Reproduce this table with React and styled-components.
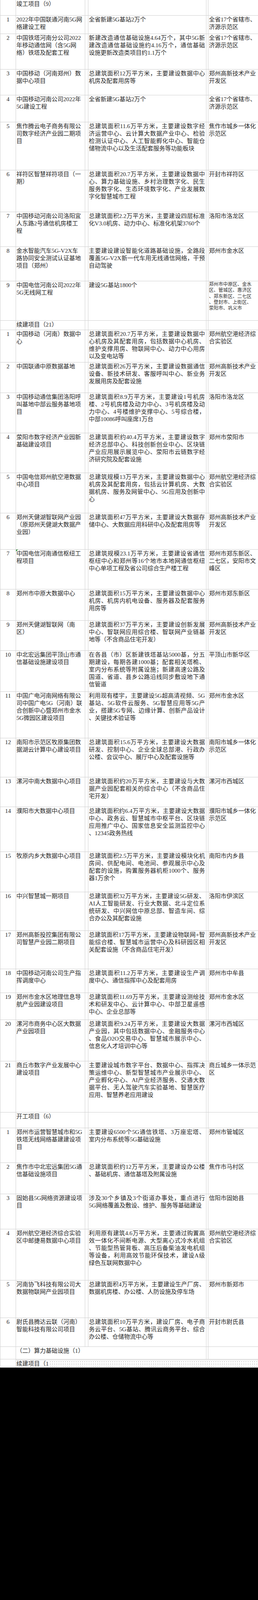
import React from 'react';
import styled, { createGlobalStyle } from 'styled-components';

const LINE = '#cfcfcf';

const GlobalStyle = createGlobalStyle`
  html, body { margin: 0; padding: 0; }
  body {
    background: #000;
    overflow-x: hidden;
    font-family: "Liberation Serif", "Noto Sans CJK SC", serif;
    color: #262626;
  }
`;

const Sheet = styled.div`
  width: 660px;
  background: #fff;
`;

const Row = styled.div`
  display: grid;
  grid-template-columns: 41px 177px 8px 302px 5px 127px;
  height: ${(p) => p.$h}px;
`;

const Cell = styled.div`
  box-sizing: border-box;
  min-width: 0;
  border-bottom: 1px solid ${LINE};
  border-right: 1px solid ${LINE};
  font-size: 15px;
  line-height: 19px;
`;

const NumCell = styled(Cell)`
  border-left: 1px solid ${LINE};
  text-align: center;
  padding-top: 1px;
  border-bottom: ${(p) => (p.$noBottom ? 'none' : `1px solid ${LINE}`)};
`;

const NameCell = styled(Cell)`
  position: relative;
  padding: 1px 3px 0 1px;
`;

const Flag = styled.span`
  position: absolute;
  top: 0;
  left: 0;
  width: 0;
  height: 0;
  border-top: 5px solid #2f8f3a;
  border-right: 5px solid transparent;
`;

const Gutter = styled(Cell)``;

const DescCell = styled(Cell)`
  padding: 1px 2.7px 0 1.3px;
`;

const LocCell = styled(Cell)`
  border-right: none;
  padding: 1px 0 0 1.5px;
`;

const SpanCell = styled(Cell)`
  grid-column: span 3;
  padding: 1px 3px 0 1px;
`;

const Line = styled.div`
  white-space: nowrap;
  text-align: justify;
  text-align-last: ${(p) => (p.$justify ? 'justify' : 'left')};
`;

const SmallLine = styled.div`
  white-space: nowrap;
  font-size: 12px;
  line-height: 15.3px;
  letter-spacing: 0.1px;
  color: #2a2a2a;
`;

const TailCell = styled.div`
  grid-column: 2 / -1;
  box-sizing: border-box;
  display: flex;
  align-items: stretch;
  border-top: 1px solid ${LINE};
  margin-top: 1px;
  padding-left: 1px;
  font-size: 15px;
  line-height: 19px;
`;

const TailText = styled.span`
  white-space: nowrap;
`;

const Dots = styled.div`
  flex: 1;
  margin-left: 1px;
  background-image: radial-gradient(circle, #b9b9b9 0.7px, transparent 1.1px);
  background-size: 5.5px 6px;
  background-position: 0 1px;
`;

const rows = [
  { t: 'sec', h: 40, text: '竣工项目（9）' },
  { t: 'item', h: 47, n: 1, name: ['2022年中国联通河南5G网', '络建设工程'], desc: ['全省新建5G基站2万个'], loc: ['全省17个省辖市、', '济源示范区'] },
  { t: 'item', h: 91, n: 2, name: ['中国铁塔河南分公司2022', '年移动通信网（含5G网', '络）铁塔及配套工程'], desc: ['新建改造通信基础设施4.64万个，其中5G新', '建改造通信基础设施约4.16万个，通信基础', '设施更新改造类项目约1.1万个'], loc: ['全省17个省辖市、', '济源示范区'] },
  { t: 'item', h: 66, n: 3, name: ['中国移动（河南郑州）数', '据中心项目'], desc: ['总建筑面积12万平方米，主要建设数据中心', '机房及配套用房等'], loc: ['郑州高新技术产业', '开发区'] },
  { t: 'item', h: 69, n: 4, name: ['中国移动河南公司2022年', '5G建设工程'], desc: ['全省新建5G基站2万个'], loc: ['全省17个省辖市、', '济源示范区'] },
  { t: 'item', h: 123, n: 5, name: ['焦作腾云电子商务有限公', '司数字经济产业园二期项', '目'], desc: ['总建筑面积11.6万平方米，主要建设数字经', '济运营中心、云计算大数据产业中心、检验', '检测认证中心、人工智能孵化中心、智能仓', '储物流中心以及生活配套服务等功能板块'], loc: ['焦作市城乡一体化', '示范区'] },
  { t: 'item', h: 107, n: 6, name: ['祥符区智慧祥符项目（一', '期）'], desc: ['总建筑面积20.7万平方米，主要建设数据中', '心、算力基础设施、乡村治理数字化、民生', '服务数字化、生态环境数字化、产业发展数', '字化智慧城市工程'], loc: ['开封市祥符区'] },
  { t: 'item', h: 89, n: 7, name: ['中国移动河南公司洛阳宜', '人东路2号通信机房楼工', '程'], desc: ['总建筑面积2.2万平方米，主要建设四层标准', '化V3.0机房、动力中心、标准化机架3760个'], loc: ['洛阳市洛龙区'] },
  { t: 'item', h: 88, n: 8, name: ['金水智能汽车5G-V2X车', '路协同安全测试认证基地', '项目（郑州）'], desc: ['主要建设建设智能化道路基础设施，全路段', '覆盖5G-V2X新一代车用无线通信网络，干预', '自动驾驶'], loc: ['郑州市金水区'] },
  { t: 'item', h: 101, n: 9, name: ['中国电信河南公司2022年', '5G无线网工程'], desc: ['建设5G基站1800个'], small: true, loc: ['郑州市中原区、金水', '区、管城区、惠济区', '、郑东新区、二七区', '、登封市、上街区、', '荥阳市、巩义市'] },
  { t: 'sec', h: 24, text: '续建项目（21）' },
  { t: 'item', h: 83, n: 1, name: ['中国移动（河南）数据中', '心'], desc: ['总建筑面积20.7万平方米，主要建设数据中', '心机房及其配套用房，包括数据中心机房、', '维护支撑用房、物联网中心、动力中心用房', '以及变电站等'], loc: ['郑州航空港经济综', '合实验区'] },
  { t: 'item', h: 78, n: 2, name: ['中国联通中原数据基地'], desc: ['总建筑面积26万平方米，主要建设数据通信', '设备、新技术研发、客服呼叫中心、新业务', '发展用房及配套设施'], loc: ['郑州高新技术产业', '开发区'] },
  { t: 'item', h: 103, n: 3, name: ['中国移动通信集团洛阳呼', '叫基地中部云服务基地项', '目'], desc: ['总建筑面积8.9万平方米，主要建设1号机房', '楼、2号机房楼及动力中心、3号机房楼及动', '力中心、4号楼维护支撑中心、5号综合楼，', '中部10086呼叫座席1万台'], loc: ['洛阳市洛龙区'] },
  { t: 'item', h: 102, n: 4, name: ['荥阳市数字经济产业园新', '基础建设项目'], desc: ['总建筑面积约40.4万平方米，主要建设数字', '经济总部中心、科技创新创业中心、区块链', '产业应用展示展览中心、荥阳市云链数字经', '济研究院及配套设施'], loc: ['郑州市荥阳市'] },
  { t: 'item', h: 103, n: 5, name: ['中国电信郑州航空港数据', '中心项目'], desc: ['总建筑规模13万平方米，主要建设数据中心', '机房及其配套用房，包括云计算机房、大数', '据机房、服务及网管中心、5G应用及创新中', '心'], loc: ['郑州航空港经济综', '合实验区'] },
  { t: 'item', h: 93, n: 6, name: ['郑州天健湖智联网产业园', '（原郑州天健湖大数据产', '业园）'], desc: ['总建筑面积47万平方米，主要建设大数据存', '储中心、大数据应用科研中心及配套用房等'], loc: ['郑州高新技术产业', '开发区'] },
  { t: 'item', h: 102, n: 7, flag: true, name: ['中国电信河南通信枢纽工', '程项目'], desc: ['总建筑规模23.1万平方米，主要建设省通信', '枢纽中心和郑州等16个地市本地网通信枢纽', '中心单项工程及省公司综合生产楼工程'], loc: ['郑州市郑东新区、', '二七区，安阳市文', '峰区'] },
  { t: 'item', h: 80, n: 8, name: ['郑州市中原大数据中心'], desc: ['总建筑面积15万平方米，主要建设数据中心', '机房、机房内机电设备、服务器及配套服务', '用房等'], loc: ['郑州市郑东新区'] },
  { t: 'item', h: 77, n: 9, name: ['郑州天健湖智联网（南', '区）'], desc: ['总建筑面积37万平方米，主要建设创新发展', '中心、智联网应用综合楼、智联网产业链基', '地等（不含商品住宅开发）'], loc: ['郑州高新技术产业', '开发区'] },
  { t: 'item', h: 105, n: 10, name: ['中北宏远集团平顶山市通', '信基础设施建设项目'], desc: ['在各县（市）区新建铁塔基站5000基，分五', '期建设，每期各建1000基；配套相关塔桅、', '室内分布系统等附属设施；新建高速公路及', '国道、省道、县乡公路沿线同步敷设地下通', '信管道'], loc: ['平顶山市新华区'] },
  { t: 'item', h: 119, n: 11, name: ['中国广电河南网络有限公', '司中国广电5G（河南）联', '合创新中心暨郑州市金水', '5G微园区建设项目'], desc: ['利用现有楼宇，主要建设5G超高清视频、5G', '基站、5G软件云服务、5G智慧应用等5G产', '业，搭建5G专网、边缘计算、创新产品设计', '、关键技术验证等'], loc: ['郑州市金水区'] },
  { t: 'item', h: 100, n: 12, name: ['南阳市示范区牧原集团数', '据湖云计算中心建设项目'], desc: ['总建筑面积15.6万平方米，主要建设大数据', '研发、控制中心、企业全球总部港、行政办', '公楼、会议中心、展厅中心及配套设施等'], loc: ['南阳市城乡一体化', '示范区'] },
  { t: 'item', h: 76, n: 13, name: ['漯河中南大数据中心项目'], desc: ['总建筑面积约20万平方米，主要建设与大数', '据产业园配套相关的综合中心（不含商品住', '宅开发）'], loc: ['漯河市西城区'] },
  { t: 'item', h: 115, n: 14, name: ['濮阳市大数据中心项目'], desc: ['总建筑面积约6.4万平方米，主要建设大数据', '中心、政务云、智慧城市中枢平台、区块链', '应用推广中心、国家信息安全监测监控中心', '、12345政务热线'], loc: ['濮阳市城乡一体化', '示范区'] },
  { t: 'item', h: 103, n: 15, name: ['牧原内乡大数据中心项目'], desc: ['总建筑面积2.5万平方米，主要建设模块化机', '房间、供配电间、电池间、参观展示中心及', '配套的设施，购置服务器机柜1000个、服务', '器1万余个'], loc: ['南阳市内乡县'] },
  { t: 'item', h: 99, n: 16, name: ['中兴智慧城一期项目'], desc: ['总建筑面积32万平方米，主要建设5G研发、', 'AI人工智能研发、行业大数据、北斗定位系', '统研发、中兴网信中原总部、智造车间、综', '合办公及其配套设施'], loc: ['洛阳市伊滨区'] },
  { t: 'item', h: 98, n: 17, name: ['郑州高新投控集团有限公', '司智慧产业园二期项目'], desc: ['总建筑面积17万平方米，主要建设物联网+智', '能综合楼、智慧城市运营中心及科研园区相', '关配套设施（不含商品住宅开发）'], loc: ['郑州高新技术产业', '开发区'] },
  { t: 'item', h: 61, n: 18, name: ['中国移动河南公司生产指', '挥调度中心'], desc: ['总建筑面积11.2万平方米，主要建设生产调', '度中心、通信指挥中心及配套用房'], loc: ['郑州市中牟县'] },
  { t: 'item', h: 69, n: 19, name: ['郑州市金水区地理信息导', '航产业园建设项目'], desc: ['总建筑面积11.69万平方米，主要建设测绘技', '术和研发中心、云计算中心、中部卫星遥感', '中心、企业总部等'], loc: ['郑州市金水区'] },
  { t: 'item', h: 106, n: 20, name: ['漯河市商务中心区大数据', '产业园项目'], desc: ['总建筑面积9.24万平方米，主要建设大数据', '产业园，其中包括数据中心、金融服务中心', '、食品O2O交易中心、智慧城市展示中心、', '信息化人才培训中心等'], loc: ['漯河市西城区'] },
  { t: 'item', h: 131, n: 21, name: ['商丘市数字产业发展中心', '建设项目'], desc: ['主要建设城市数字平台、数据中心、指挥决', '策运维中心、新型智慧城市产业展示中心、', '产业孵化中心、AI产业经济服务、交通大数', '据平台、无人驾驶汽车实验基地、智慧医疗', '应用、智慧养老应用建设'], loc: ['商丘城乡一体示范', '区'] },
  { t: 'sec', h: 40, text: '开工项目（6）' },
  { t: 'item', h: 89, n: 1, name: ['郑州市运营智慧城市和5G', '铁塔无线网络基建建设项', '目'], desc: ['主要建设6500个5G通信铁塔、3万座宏塔、', '室内分布系统等5G基础设施'], loc: ['郑州市管城区'] },
  { t: 'item', h: 80, n: 2, name: ['焦作市中北宏远集团5G通', '信基础设施项目'], desc: ['总建筑面积约12万平方米，主要建设办公楼', '、基础机房、通信基塔及附属设施'], loc: ['焦作市马村区'] },
  { t: 'item', h: 90, n: 3, name: ['固始县5G网络资源建设项', '目'], desc: ['涉及30个乡镇及3个街道办事处，重点进行', '5G网络覆盖及敷设、维护、服务等基础建设'], loc: ['信阳市固始县'] },
  { t: 'item', h: 131, n: 4, name: ['郑州航空港经济综合实验', '区中邮捷易数据中心项目'], desc: ['利用原有建筑4.6万平方米，主要通过购置高', '效一体化不间断电源、大型离心式冷水机组', '、节能型热管背板、高压后备柴油发电机组', '等设备，利用高效节能环保技术，建设A级', '绿色互联网数据中心'], loc: ['郑州航空港经济综', '合实验区'] },
  { t: 'item', h: 96, n: 5, name: ['河南协飞科技有限公司大', '数据物联网产业园项目'], desc: ['总建筑面积4万平方米，主要建设生产厂房、', '数据机房楼、办公楼、人防设施及停车场'], loc: ['郑州市新郑市'] },
  { t: 'item', h: 74, n: 6, name: ['尉氏县腾达云联（河南）', '智能科技有限公司项目'], desc: ['总建筑面积10万平方米，建设厂房、电子商', '务云平台、5G基站、腾讯云商务平台、综合', '办公楼、仓储物流中心等'], loc: ['开封市尉氏县'] },
  { t: 'merged', h: 32, text: '（二）算力基础设施（1）' },
  { t: 'tail', h: 21, text: '续建项目（1' },
];

function Lines({ lines, justify }) {
  return lines.map((l, i) => (
    <Line key={i} $justify={justify && i < lines.length - 1}>
      {l}
    </Line>
  ));
}

function TableRow({ row }) {
  if (row.t === 'sec') {
    return (
      <Row $h={row.h}>
        <NumCell />
        <NameCell>{row.text}</NameCell>
        <Gutter />
        <DescCell />
        <Gutter />
        <LocCell />
      </Row>
    );
  }
  if (row.t === 'merged') {
    return (
      <Row $h={row.h}>
        <NumCell />
        <SpanCell>{row.text}</SpanCell>
        <Gutter />
        <LocCell />
      </Row>
    );
  }
  if (row.t === 'tail') {
    return (
      <Row $h={row.h}>
        <NumCell $noBottom />
        <TailCell>
          <TailText>{row.text}</TailText>
          <Dots />
        </TailCell>
      </Row>
    );
  }
  return (
    <Row $h={row.h}>
      <NumCell>{row.n}</NumCell>
      <NameCell>
        {row.flag && <Flag />}
        <Lines lines={row.name} />
      </NameCell>
      <Gutter />
      <DescCell>
        <Lines lines={row.desc} justify />
      </DescCell>
      <Gutter />
      <LocCell>
        {row.small
          ? row.loc.map((l, i) => <SmallLine key={i}>{l}</SmallLine>)
          : <Lines lines={row.loc} />}
      </LocCell>
    </Row>
  );
}

export default function App() {
  return (
    <>
      <GlobalStyle />
      <Sheet>
        {rows.map((r, i) => (
          <TableRow key={i} row={r} />
        ))}
      </Sheet>
    </>
  );
}
